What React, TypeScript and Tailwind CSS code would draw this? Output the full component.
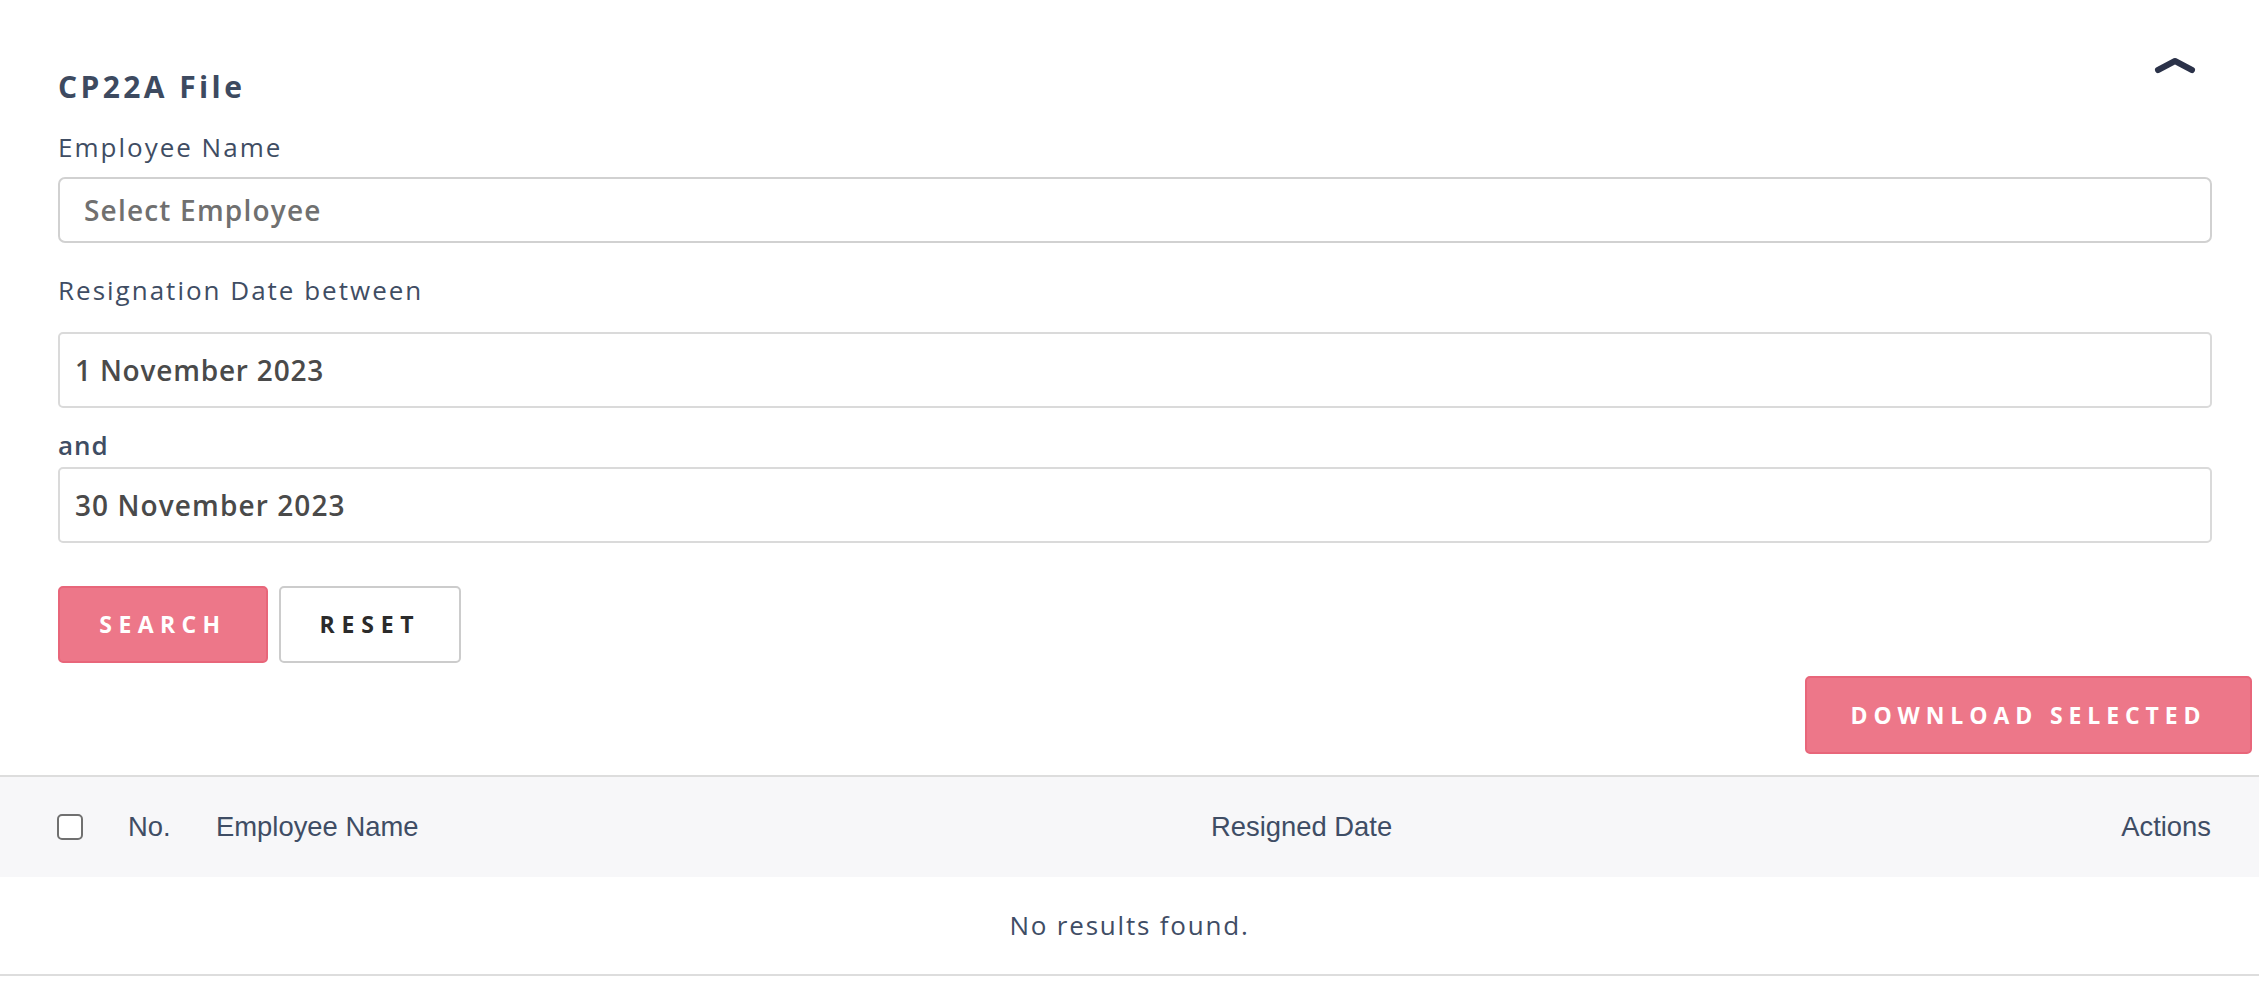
import { useState } from "react";

const ChevronUp = () => (
  <svg width="44" height="20" viewBox="0 0 44 20" fill="none">
    <polyline
      points="5,15 22,6 39,15"
      stroke="#2b3249"
      strokeWidth="6"
      strokeLinecap="round"
      strokeLinejoin="round"
    />
  </svg>
);

const App = () => {
  const [from] = useState("1 November 2023");
  const [to] = useState("30 November 2023");

  return (
    <div className="min-h-screen bg-white font-['Open_Sans',sans-serif] text-[#3f4d63]">
      {/* Filter form */}
      <section className="pl-[58px] pr-[47px] pt-[50px]">
        <div className="flex items-start justify-between">
          <h2 className="mt-[17px] text-[30px] leading-[40px] font-bold tracking-[3.4px] text-[#3d4a60]">
            CP22A File
          </h2>
          <button className="mt-[5px] mr-[15px]">
            <ChevronUp />
          </button>
        </div>

        <label className="mt-[24px] block text-[26px] leading-[32px] tracking-[2px]">
          Employee Name
        </label>
        <input
          readOnly
          placeholder="Select Employee"
          className="mt-[14px] block h-[66px] w-full rounded-[7px] border-2 border-[#d1d1d1] bg-white pl-[24px] text-[28px] font-semibold tracking-[1.2px] text-[#4a4a4a] outline-none placeholder:text-[#707070]"
        />

        <label className="mt-[31px] block text-[26px] leading-[32px] tracking-[2px]">
          Resignation Date between
        </label>
        <input
          readOnly
          value={from}
          className="mt-[26px] block h-[76px] w-full rounded-[5px] border-2 border-[#dadada] bg-white pl-[15px] text-[28px] font-semibold tracking-[0.8px] text-[#4a4a4a] outline-none"
        />

        <label className="mt-[21px] block text-[26px] leading-[32px] font-semibold tracking-[1px]">
          and
        </label>
        <input
          readOnly
          value={to}
          className="mt-[6px] block h-[76px] w-full rounded-[5px] border-2 border-[#dadada] bg-white pl-[15px] text-[28px] font-semibold tracking-[1.1px] text-[#4a4a4a] outline-none"
        />

        <div className="mt-[43px] flex gap-[11px]">
          <button className="h-[77px] w-[210px] rounded-[5px] border-2 border-[#e8667a] bg-[#ed7789] text-[23px] font-bold tracking-[6.4px] text-white">
            SEARCH
          </button>
          <button className="h-[77px] w-[182px] rounded-[5px] border-2 border-[#cccccc] bg-white text-[23px] font-bold tracking-[6.8px] text-[#2b2b2b]">
            RESET
          </button>
        </div>
      </section>

      <div className="mt-[13px] flex justify-end pr-[7px]">
        <button className="h-[78px] w-[447px] rounded-[5px] border-2 border-[#e8667a] bg-[#ed7789] text-[23px] font-bold tracking-[5.9px] text-white">
          DOWNLOAD SELECTED
        </button>
      </div>

      {/* Results table */}
      <div className="mt-[21px] border-t-2 border-[#dddddd]">
        <div className="flex h-[100px] items-center bg-[#f7f7f9] pl-[57px] pr-[48px] font-['Liberation_Sans',Arial,sans-serif] text-[27.4px] text-[#3f4d65]">
          <input
            type="checkbox"
            className="h-[26px] w-[26px] appearance-none rounded-[5px] border-2 border-[#707070] bg-white"
          />
          <span className="ml-[45px] w-[88px]">No.</span>
          <span className="w-[995px]">Employee Name</span>
          <span className="flex-1">Resigned Date</span>
          <span>Actions</span>
        </div>
        <div className="flex h-[99px] items-center justify-center border-b-2 border-[#dddddd] text-[26px] tracking-[1.8px] text-[#3f4d65]">
          No results found.
        </div>
      </div>
    </div>
  );
};

export default App;
